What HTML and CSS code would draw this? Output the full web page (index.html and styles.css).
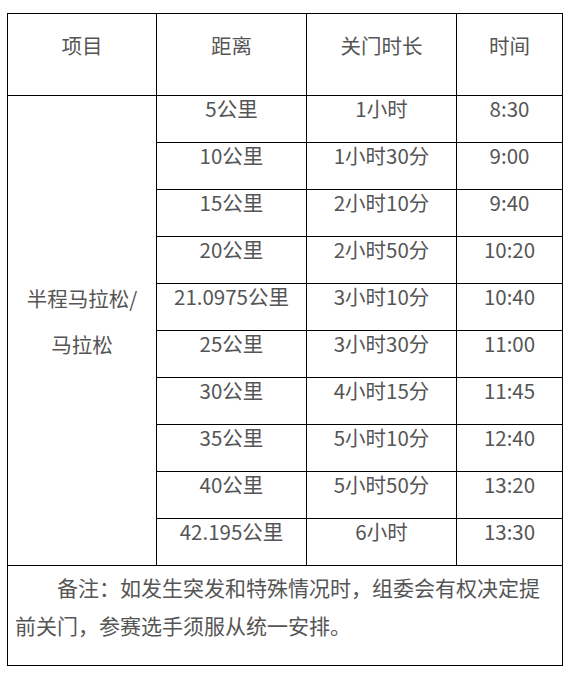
FILE: index.html
```html
<!DOCTYPE html>
<html lang="zh-CN">
<head>
<meta charset="utf-8">
<title>关门时间</title>
<link rel="stylesheet" href="styles.css">
</head>
<body>
<table class="tbl">
  <colgroup>
    <col class="c1"><col class="c2"><col class="c3"><col class="c4">
  </colgroup>
  <tr class="head">
    <td>项目</td><td>距离</td><td>关门时长</td><td>时间</td>
  </tr>
  <tr class="row">
    <td class="merged" rowspan="10"><div class="mtext">半程马拉松/<br>马拉松</div></td>
    <td>5公里</td><td>1小时</td><td>8:30</td>
  </tr>
  <tr class="row"><td>10公里</td><td>1小时30分</td><td>9:00</td></tr>
  <tr class="row"><td>15公里</td><td>2小时10分</td><td>9:40</td></tr>
  <tr class="row"><td>20公里</td><td>2小时50分</td><td>10:20</td></tr>
  <tr class="row"><td>21.0975公里</td><td>3小时10分</td><td>10:40</td></tr>
  <tr class="row"><td>25公里</td><td>3小时30分</td><td>11:00</td></tr>
  <tr class="row"><td>30公里</td><td>4小时15分</td><td>11:45</td></tr>
  <tr class="row"><td>35公里</td><td>5小时10分</td><td>12:40</td></tr>
  <tr class="row"><td>40公里</td><td>5小时50分</td><td>13:20</td></tr>
  <tr class="row"><td>42.195公里</td><td>6小时</td><td>13:30</td></tr>
  <tr class="note">
    <td colspan="4"><p class="note-text">备注：如发生突发和特殊情况时，组委会有权决定提前关门，参赛选手须服从统一安排。</p></td>
  </tr>
</table>
</body>
</html>
```

FILE: styles.css
```css
html, body {
  margin: 0;
  padding: 0;
  background: #ffffff;
}
body {
  padding: 13px 0 0 7px;
  font-family: "Microsoft YaHei", "Noto Sans CJK SC", "Noto Sans", sans-serif;
  color: #555555;
  font-size: 20.5px;
}
.tbl {
  border-collapse: collapse;
  table-layout: fixed;
  width: 555px;
}
.c1 { width: 149px; }
.c2 { width: 150px; }
.c3 { width: 150px; }
.c4 { width: 106px; }
.tbl td {
  border: 1px solid #000000;
  padding: 0 7px;
  text-align: center;
  vertical-align: top;
  line-height: 24px;
  white-space: nowrap;
}
.head td {
  height: 82px;
  box-sizing: border-box;
  padding-top: 19px;
}
.row td {
  height: 47px;
  box-sizing: border-box;
}
.tbl td.merged {
  vertical-align: middle;
  padding-bottom: 20px;
}
.mtext {
  line-height: 46px;
}
.note td {
  height: 100px;
  box-sizing: border-box;
  text-align: left;
  white-space: normal;
  padding: 2px 7px 0 7px;
}
.note-text {
  margin: 0;
  line-height: 38px;
  text-indent: 2em;
  font-size: 21px;
}
```
